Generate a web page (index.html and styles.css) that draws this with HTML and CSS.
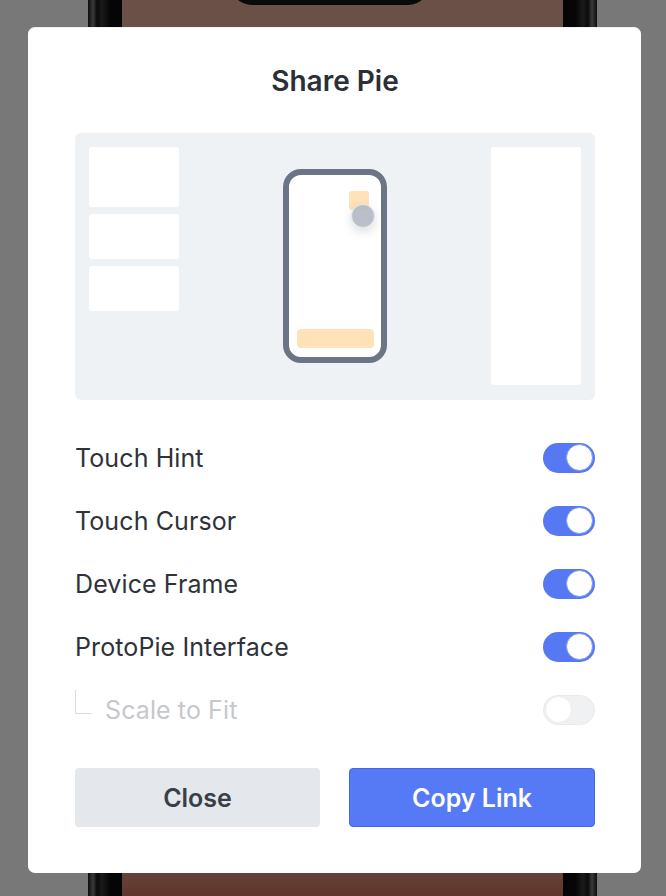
FILE: index.html
```html
<!DOCTYPE html>
<html lang="en">
<head>
<meta charset="utf-8">
<title>Share Pie</title>
<link rel="stylesheet" href="styles.css">
</head>
<body>
<div class="backdrop">
  <div class="device">
    <div class="screen">
      <div class="notch"></div>
    </div>
  </div>
</div>

<div class="modal">
  <h1 class="title">Share Pie</h1>

  <div class="preview">
    <div class="preview-left">
      <div class="card card-tall"></div>
      <div class="card"></div>
      <div class="card"></div>
    </div>
    <div class="preview-center">
      <div class="mini-phone">
        <div class="hint-box"></div>
        <div class="cursor"></div>
        <div class="hint-bar"></div>
      </div>
    </div>
    <div class="preview-right"></div>
  </div>

  <ul class="options">
    <li class="option">
      <span class="option-label">Touch Hint</span>
      <span class="toggle toggle-on"><span class="knob"></span></span>
    </li>
    <li class="option">
      <span class="option-label">Touch Cursor</span>
      <span class="toggle toggle-on"><span class="knob"></span></span>
    </li>
    <li class="option">
      <span class="option-label">Device Frame</span>
      <span class="toggle toggle-on"><span class="knob"></span></span>
    </li>
    <li class="option">
      <span class="option-label">ProtoPie Interface</span>
      <span class="toggle toggle-on"><span class="knob"></span></span>
    </li>
    <li class="option option-disabled">
      <span class="option-label"><span class="sub-marker"></span>Scale to Fit</span>
      <span class="toggle toggle-off"><span class="knob"></span></span>
    </li>
  </ul>

  <div class="actions">
    <button class="btn btn-secondary">Close</button>
    <button class="btn btn-primary">Copy Link</button>
  </div>
</div>
</body>
</html>
```

FILE: styles.css
```css
* { box-sizing: border-box; }

html, body {
  margin: 0;
  padding: 0;
  overflow: hidden;
}

body {
  width: 666px;
  height: 896px;
  background: #787878;
  font-family: Inter, "Noto Sans", "Liberation Sans", sans-serif;
  position: relative;
}

/* background device behind the dimmed overlay */
.backdrop {
  position: absolute;
  inset: 0;
  z-index: 0;
  overflow: hidden;
}

.device {
  position: absolute;
  left: 88px;
  top: -80px;
  width: 509px;
  height: 1056px;
  border-radius: 70px;
  background: linear-gradient(to right, #0c0c0c 0, #3a3a3a 5px, #0a0a0a 9px, #1a1a1a 14px, #050505 22px, #050505 calc(100% - 22px), #1a1a1a calc(100% - 14px), #0a0a0a calc(100% - 9px), #3a3a3a calc(100% - 5px), #0c0c0c 100%);
  padding: 0 34px;
}

.screen {
  position: relative;
  height: 100%;
  border-radius: 40px;
  background: linear-gradient(to bottom, #6a5046 0, #6a5046 10%, #6a5046 88%, #5f3127 93%, #5e3027 100%);
  overflow: hidden;
}

.screen::after {
  content: "";
  position: absolute;
  left: 0;
  right: 0;
  bottom: 0;
  height: 40px;
  background: linear-gradient(to right, #5d2d24 0, #5c2c23 30%, #7b6153 40%, #74574a 45%, #6c4b3f 60%, #6b4a3e 100%);
}

.notch {
  position: absolute;
  top: 0;
  left: 108px;
  width: 200px;
  height: 85px;
  border-radius: 0 0 22px 22px;
  background: #0a0a0a;
}

/* modal */
.modal {
  position: relative;
  z-index: 1;
  width: 613px;
  height: 846px;
  margin: 27px 0 0 28px;
  padding: 38px 46px 46px 47px;
  background: #ffffff;
  border-radius: 7px;
  border-top: 1px solid #eef1f5;
  display: flex;
  flex-direction: column;
}

.title {
  margin: 0;
  font-size: 28px;
  line-height: 31px;
  font-weight: 600;
  color: #2b2f36;
  text-align: center;
}

.preview {
  margin-top: 36px;
  height: 267px;
  background: #eff2f5;
  border-radius: 6px;
  padding: 14px 14px 15px 14px;
  display: grid;
  grid-template-columns: 90px 1fr 90px;
}

.preview-left {
  display: flex;
  flex-direction: column;
  gap: 7px;
}

.card {
  height: 45px;
  background: #ffffff;
  border-radius: 3px;
}

.card-tall { height: 60px; }

.preview-right {
  background: #ffffff;
  border-radius: 3px;
}

.preview-center {
  display: flex;
  align-items: center;
  justify-content: center;
}

.mini-phone {
  position: relative;
  width: 104px;
  height: 194px;
  border: 6px solid #6c7586;
  border-radius: 18px;
  background: #ffffff;
}

.hint-box {
  position: absolute;
  left: 60px;
  top: 16px;
  width: 20px;
  height: 19px;
  border-radius: 3px;
  background: #ffe2b8;
}

.cursor {
  position: absolute;
  left: 62px;
  top: 29px;
  width: 24px;
  height: 24px;
  border-radius: 50%;
  background: rgba(178, 184, 196, 0.9);
  border: 1.5px solid #e6e8ec;
  box-shadow: 0 4px 10px rgba(60, 70, 90, 0.18);
}

.hint-bar {
  position: absolute;
  left: 8px;
  right: 7px;
  bottom: 9px;
  height: 19px;
  border-radius: 4px;
  background: #ffe2b8;
}

/* options */
.options {
  list-style: none;
  margin: 26px 0 0 0;
  padding: 0;
}

.option {
  height: 63px;
  display: flex;
  align-items: center;
  justify-content: space-between;
}

.option-label {
  display: flex;
  align-items: center;
  font-size: 25px;
  color: #2e3239;
  letter-spacing: 0.1px;
}

.option-disabled .option-label { color: #c6c8cc; }

.sub-marker {
  width: 16px;
  height: 24px;
  border-left: 1.5px solid #d9dbde;
  border-bottom: 1.5px solid #d9dbde;
  margin: 0 14px 16px 0;
}

.toggle {
  position: relative;
  width: 52px;
  height: 30px;
  border-radius: 15px;
  display: flex;
  align-items: center;
  padding: 0 2px;
}

.toggle-on {
  background: #5679f3;
  justify-content: flex-end;
}

.toggle-off {
  background: #f0f1f3;
  border: 1px solid #e9eaec;
  justify-content: flex-start;
  padding: 0 1px;
}

.knob {
  width: 27px;
  height: 27px;
  border-radius: 50%;
  background: #ffffff;
}

.toggle-on .knob { border: 1px solid #7d98f5; }
.toggle-off .knob { border: 1px solid #eceef0; }

/* actions */
.actions {
  margin-top: 27px;
  display: grid;
  grid-template-columns: 245px 246px;
  justify-content: space-between;
}

.btn {
  height: 59px;
  border-radius: 4px;
  font-family: Inter, "Noto Sans", "Liberation Sans", sans-serif;
  font-size: 25px;
  font-weight: 600;
  border: 1px solid transparent;
  padding: 0;
  cursor: pointer;
}

.btn-secondary {
  background: #e4e7eb;
  color: #3a3f47;
}

.btn-primary {
  background: #5679f5;
  border-color: #3f67ee;
  color: #ffffff;
}
```
